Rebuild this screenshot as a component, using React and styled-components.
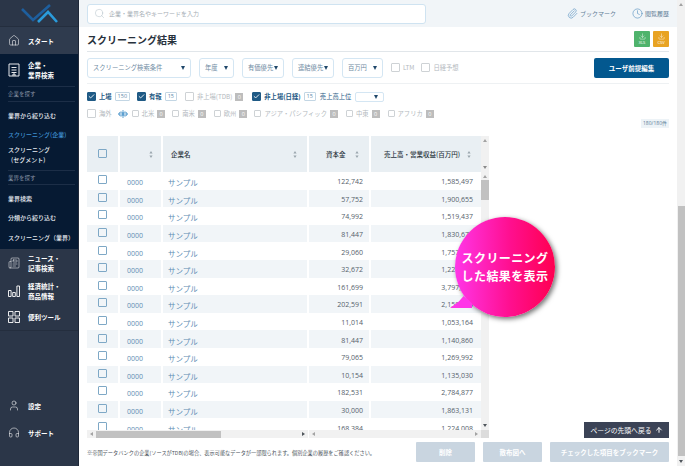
import React from 'react';
import styled, { createGlobalStyle } from 'styled-components';
import { House, Newspaper, User, Headphones, Search, Paperclip, Clock, Download, ArrowUp, Check } from 'lucide-react';

const JP = `"Noto Sans CJK JP", "Noto Sans", sans-serif`;
const NUM = `"Open Sans", "Noto Sans CJK JP", sans-serif`;

const rows = [
  ['122,742', '1,585,497'], ['57,752', '1,900,655'], ['74,992', '1,519,437'], ['81,447', '1,830,671'],
  ['29,060', '1,757,204'], ['32,672', '1,224,518'], ['161,699', '3,797,120'], ['202,591', '2,158,336'],
  ['11,014', '1,053,164'], ['81,447', '1,140,860'], ['79,065', '1,269,992'], ['10,154', '1,135,030'],
  ['182,531', '2,784,877'], ['30,000', '1,863,131'], ['168,384', '1,224,008'],
];

const GlobalStyle = createGlobalStyle`
  html, body { margin: 0; padding: 0; width: 685px; height: 466px; overflow: hidden; background: #fff; }
  * { box-sizing: border-box; }
`;

const Page = styled.div`
  display: flex;
  width: 685px;
  height: 466px;
  font-family: ${JP};
  overflow: hidden;
`;

const Sidebar = styled.aside`
  width: 79px;
  flex: none;
  display: flex;
  flex-direction: column;
  background: #2b3648;
  border-right: 1px solid #1f2838;
  color: #fff;
`;
const LogoBox = styled.div`
  height: 27px;
  flex: none;
  border-bottom: 1px solid #242e3e;
`;
const NavItem = styled.div`
  height: ${(p) => p.$h || 27}px;
  flex: none;
  display: flex;
  align-items: center;
  gap: 8px;
  padding-left: 8px;
  background: ${(p) => p.$bg || 'transparent'};
  font-size: 6.5px;
  line-height: 10px;
  font-weight: 700;
  svg { flex: none; width: 12px; }
`;
const SubMenu = styled.div`
  height: 163px;
  flex: none;
  background: #061a33;
  display: flex;
  flex-direction: column;
  padding-left: 8px;
`;
const SubHead = styled.div`
  height: ${(p) => p.$h || 16}px;
  flex: none;
  margin: ${(p) => p.$mt || 0}px 3px 0 0;
  border-top: 1px solid #1c2e47;
  border-bottom: 1px solid #1c2e47;
  display: flex;
  align-items: center;
  font-size: 5.5px;
  color: #8793a5;
`;
const SubLink = styled.div`
  margin-top: ${(p) => p.$mt || 0}px;
  padding-left: ${(p) => p.$indent || 0}px;
  height: 10px;
  flex: none;
  line-height: 10px;
  font-size: 6px;
  color: ${(p) => (p.$on ? '#3e8fd0' : '#e6ebf1')};
  font-weight: 500;
  white-space: nowrap;
`;
const SideSpacer = styled.div`
  flex: 1;
  border-top: 1px solid #242e3e;
`;
const SideEnd = styled.div`
  height: 20px;
  flex: none;
`;

const Main = styled.main`
  flex: 1;
  min-width: 0;
  position: relative;
  display: flex;
  flex-direction: column;
`;
const TopBar = styled.div`
  height: 27px;
  flex: none;
  background: #f1f5f8;
  display: flex;
  align-items: center;
  padding: 0 8px;
`;
const SearchBox = styled.div`
  width: 339px;
  height: 20px;
  margin-right: auto;
  background: #fff;
  border: 1px solid #cfe3f1;
  border-radius: 3px;
  display: flex;
  align-items: center;
  gap: 4px;
  padding-left: 6px;
  font-size: 6px;
  color: #a6aeb5;
`;
const TopLink = styled.div`
  display: flex;
  align-items: center;
  gap: 2px;
  margin-left: ${(p) => p.$ml || 0}px;
  font-size: 6px;
  color: #5f7d96;
  white-space: nowrap;
  svg { color: #4f8dbd; flex: none; }
`;
const TitleRow = styled.div`
  height: 25px;
  flex: none;
  margin: 0 8px;
  border-bottom: 1px solid #e1e6ea;
  display: flex;
  align-items: center;
  justify-content: space-between;
`;
const Title = styled.h1`
  margin: 0;
  font-size: 10px;
  font-weight: 700;
  color: #27313c;
`;
const Exports = styled.div`
  display: flex;
  gap: 3px;
  padding-bottom: 1px;
`;
const ExportBtn = styled.div`
  width: 16px;
  height: 16px;
  background: ${(p) => p.$c};
  border-radius: 1px;
  color: #fff;
  display: flex;
  flex-direction: column;
  align-items: center;
  justify-content: center;
  font-family: ${NUM};
  font-size: 4px;
  line-height: 5px;
`;
const FilterRow = styled.div`
  height: 32px;
  flex: none;
  margin: 0 8px;
  border-bottom: 1px solid #eef1f3;
  display: flex;
  align-items: center;
  gap: 8px;
`;
const Select = styled.div`
  width: ${(p) => p.$w}px;
  height: 20px;
  flex: none;
  border: 1px solid #d4e6f3;
  border-radius: 3px;
  padding: 0 5px;
  display: flex;
  align-items: center;
  justify-content: space-between;
  font-size: 6.3px;
  color: #6f8ba3;
  white-space: nowrap;
`;
const Caret = styled.span`
  width: 0;
  height: 0;
  flex: none;
  border-left: 2px solid transparent;
  border-right: 2px solid transparent;
  border-top: 4px solid #20486b;
`;
const EditBtn = styled.div`
  width: 75px;
  height: 20px;
  margin-left: auto;
  background: #03588f;
  border-radius: 2px;
  color: #fff;
  font-size: 6.5px;
  font-weight: 700;
  display: flex;
  align-items: center;
  justify-content: center;
`;
const CheckRow = styled.div`
  display: flex;
  align-items: center;
  height: 17px;
  flex: none;
  margin: ${(p) => p.$mt || 0}px 8px 0;
`;
const Item = styled.div`
  display: flex;
  align-items: center;
  gap: 3px;
  margin-right: ${(p) => p.$mr || 0}px;
  font-size: 6.3px;
  white-space: nowrap;
  font-weight: ${(p) => (p.$on ? 700 : 400)};
  color: ${(p) => (p.$on ? '#1f5a85' : '#b3b9be')};
`;
const PlainLabel = styled.span`
  font-size: 6.3px;
  color: #1f5a85;
  white-space: nowrap;
`;
const Box = styled.span`
  width: ${(p) => p.$s || 9}px;
  height: ${(p) => p.$s || 9}px;
  flex: none;
  display: inline-flex;
  align-items: center;
  justify-content: center;
  background: ${(p) => (p.$on ? '#1f5a85' : '#fff')};
  border: 1px solid ${(p) => (p.$on ? '#1f5a85' : '#ced2d5')};
  border-radius: 1px;
  color: #fff;
`;
const Count = styled.span`
  height: 9px;
  padding: 0 2px;
  border: 1px solid #c3d6e4;
  border-radius: 1px;
  font-family: ${NUM};
  font-size: 5.5px;
  line-height: 7px;
  font-weight: 400;
  color: #5d8aab;
`;
const Zero = styled.span`
  width: 8px;
  height: 8px;
  background: #bdbdbd;
  color: #fff;
  font-family: ${NUM};
  font-size: 5.5px;
  font-weight: 400;
  line-height: 8px;
  text-align: center;
`;
const MiniSelect = styled.span`
  width: 29px;
  height: 10px;
  margin-left: 4px;
  border: 1px solid #d4e6f3;
  border-radius: 2px;
  display: inline-flex;
  align-items: center;
  justify-content: flex-end;
  padding-right: 5px;
`;
const LinkMark = styled.span`
  display: inline-flex;
  margin-right: 4px;
`;
const Total = styled.div`
  align-self: flex-end;
  flex: none;
  margin: -3px 8px 0 0;
  height: 9px;
  padding: 0 2px;
  background: #edf3f7;
  color: #5d7f98;
  font-family: ${NUM};
  font-size: 5px;
  line-height: 9px;
`;

const TableWrap = styled.div`
  width: 402px;
  height: 302px;
  flex: none;
  margin: 8px 0 0 8px;
  display: flex;
  flex-direction: column;
`;
const HeadRow = styled.div`
  display: flex;
  height: 36px;
  flex: none;
`;
const Body = styled.div`
  flex: 1;
  min-height: 0;
  display: flex;
`;
const RowsClip = styled.div`
  width: 394px;
  overflow: hidden;
`;
const Row = styled.div`
  display: flex;
  height: 17.6px;
  background: ${(p) => (p.$odd ? '#f1f5f8' : '#fff')};
`;
const Cell = styled.div`
  width: ${(p) => p.$w}px;
  flex: none;
  display: flex;
  align-items: center;
  justify-content: ${(p) => p.$j || 'flex-start'};
  padding: ${(p) => p.$p || '0'};
  border-right: ${(p) => (p.$gap === undefined ? 2 : p.$gap)}px solid #fff;
  font-family: ${NUM};
  font-size: 7px;
  color: #55616b;
  white-space: nowrap;
`;
const HeadCell = styled(Cell)`
  background: #e9eff3;
  font-family: ${JP};
  font-size: 6.5px;
  font-weight: 500;
  color: #2b3640;
  justify-content: ${(p) => p.$j || 'space-between'};
`;
const RowBox = styled(Box)`
  border: 1px solid #7ea8c6;
  background: transparent;
  transform: translateY(-1px);
`;
const CodeText = styled.span`
  color: #5e8db3;
  transform: translateY(1.5px);
`;
const NameText = styled.span`
  font-family: ${JP};
  font-size: 7.5px;
  color: #5e8db3;
  transform: translateY(1.5px);
`;
const Amount = styled.span`
  transform: translateY(1px);
`;
const Sort = styled.svg`
  width: 4px;
  height: 7px;
  flex: none;
  fill: #9aa5ad;
`;
const VScroll = styled.div`
  width: 8px;
  flex: none;
  background: #f1f1f1;
  display: flex;
  flex-direction: column;
  align-items: center;
  justify-content: space-between;
  padding: 3px 0;
`;
const VThumbBox = styled.div`
  flex: 1;
  width: 100%;
  padding-top: 2px;
`;
const VThumb = styled.div`
  width: 100%;
  height: 20px;
  background: #c1c1c1;
`;
const Tri = styled.span`
  width: 0;
  height: 0;
  flex: none;
  border-left: 2px solid transparent;
  border-right: 2px solid transparent;
  ${(p) => (p.$down ? `border-top: 3px solid ${p.$c || '#50565c'};` : `border-bottom: 3px solid ${p.$c || '#a3a3a3'};`)}
`;
const SideTri = styled.span`
  width: 0;
  height: 0;
  flex: none;
  border-top: 2px solid transparent;
  border-bottom: 2px solid transparent;
  ${(p) => (p.$right ? `border-left: 3px solid ${p.$c || '#50565c'};` : `border-right: 3px solid ${p.$c || '#a3a3a3'};`)}
`;
const HBar = styled.div`
  height: 8px;
  flex: none;
  display: flex;
`;
const HScroll = styled.div`
  width: ${(p) => p.$w}px;
  flex: none;
  margin-right: ${(p) => p.$mr || 0}px;
  background: #f1f1f1;
  display: flex;
  align-items: center;
  justify-content: space-between;
  padding: 0 3px;
`;
const HThumb = styled.div`
  width: 125px;
  height: 7px;
  margin: 0 auto 0 3px;
  background: #c1c1c1;
`;
const Corner = styled.div`
  width: 8px;
  background: #dcdcdc;
`;

const Footer = styled.div`
  height: 28px;
  flex: none;
  display: flex;
  align-items: center;
  padding: 0 8px;
`;
const Note = styled.div`
  font-size: 5.2px;
  color: #4a525a;
  white-space: nowrap;
`;
const Buttons = styled.div`
  display: flex;
  gap: 8px;
  margin-left: auto;
`;
const GrayBtn = styled.div`
  width: ${(p) => p.$w}px;
  height: 20px;
  background: #c9d5e0;
  border-radius: 1px;
  color: #fff;
  font-size: 6.5px;
  font-weight: 700;
  display: flex;
  align-items: center;
  justify-content: center;
`;
const ToTop = styled.div`
  position: absolute;
  left: 505px;
  top: 422px;
  width: 85px;
  height: 16px;
  background: #3b4356;
  color: #fff;
  font-size: 6.8px;
  display: flex;
  align-items: center;
  justify-content: center;
  gap: 3px;
`;
const Bubble = styled.div`
  position: absolute;
  left: 376px;
  top: 217px;
  width: 100px;
  height: 100px;
  border-radius: 50%;
  background: linear-gradient(90deg, #ff36e8 0%, #ff0f8f 55%, #ff0050 100%);
  box-shadow: 2px 2px 5px rgba(0, 0, 0, 0.55);
  color: #fff;
  font-size: 12px;
  line-height: 18px;
  font-weight: 700;
  letter-spacing: 0.4px;
  text-align: center;
  display: flex;
  flex-direction: column;
  justify-content: center;
  white-space: nowrap;
  &::before {
    content: '';
    position: absolute;
    left: -5px;
    bottom: 9px;
    width: 22px;
    height: 12px;
    background: #ff36e8;
    clip-path: polygon(0 100%, 40% 45%, 62% 0, 100% 60%, 100% 100%);
  }
`;
const PageScroll = styled.div`
  width: 8px;
  flex: none;
  background: #f1f1f1;
  display: flex;
  flex-direction: column;
  align-items: center;
  padding: 3px 0;
`;
const PageThumb = styled.div`
  width: 7px;
  height: 250px;
  margin-top: 200px;
  background: #c1c1c1;
`;
const PageTrackEnd = styled.div`
  flex: 1;
  display: flex;
  align-items: flex-end;
`;

const SortIcon = () => (
  <Sort viewBox="0 0 4 7"><path d="M2 0l1.6 2.6H.4zM2 7L.4 4.4h3.2z" /></Sort>
);

const Logo = () => (
  <svg width="78" height="26" viewBox="0 0 78 26" fill="none" strokeWidth="2.6">
    <path d="M22 9l11 11L50 5" stroke="#1e5f9e" />
    <path d="M38 22l10-10 9 10" stroke="#2a9bdb" />
  </svg>
);
const BuildingIcon = () => (
  <svg width="12" height="14" viewBox="0 0 12 14" fill="none" stroke="#fff" strokeWidth="0.9">
    <path d="M1 1h10v12H1zM3.500 4.500h5M3.500 7h5M3.500 9.500h5M5 13v-2h2v2" />
  </svg>
);
const ChartIcon = () => (
  <svg width="12" height="12" viewBox="0 0 12 12" fill="none" stroke="#fff" strokeWidth="0.9">
    <path d="M.5 5.500h2.600v6H.5zM4.700 7.500h2.600v4H4.700zM8.900 1h2.600v10.500H8.900z" />
  </svg>
);
const GridIcon = () => (
  <svg width="12" height="12" viewBox="0 0 12 12" fill="none" stroke="#fff" strokeWidth="0.9">
    <path d="M.5.5h4.500v4.500H.5zM7 .5h4.500v4.500H7zM.5 7h4.500v4.500H.5zM7 7h4.500v4.500H7z" />
  </svg>
);
const LinkIcon = () => (
  <svg width="10" height="8" viewBox="0 0 10 8" fill="none" stroke="#4f97cc" strokeWidth="0.9">
    <circle cx="3" cy="4" r="2" />
    <circle cx="7" cy="4" r="2" />
    <path d="M5 0v8M0 4h10" />
  </svg>
);

const Filter = ({ label, on, count, zero, mr, s }) => (
  <Item $on={on} $mr={mr}>
    <Box $on={on} $s={s}>{on && <Check size={7} strokeWidth={3} />}</Box>
    {label}
    {count && <Count>{count}</Count>}
    {zero && <Zero>0</Zero>}
  </Item>
);

const App = () => (
  <Page>
    <GlobalStyle />
    <Sidebar>
      <LogoBox><Logo /></LogoBox>
      <NavItem $bg="#2f3b4e"><House size={13} strokeWidth={1.1} />スタート</NavItem>
      <NavItem $bg="#061a33" $h={32}><BuildingIcon /><span>企業・<br />業界検索</span></NavItem>
      <SubMenu>
        <SubHead>企業を探す</SubHead>
        <SubLink $mt={9}>業界から絞り込む</SubLink>
        <SubLink $mt={9} $on>スクリーニング(企業)</SubLink>
        <SubLink $mt={5}>スクリーニング</SubLink>
        <SubLink $indent={3}>(セグメント)</SubLink>
        <SubHead $mt={5} $h={15}>業界を探す</SubHead>
        <SubLink $mt={9}>業界検索</SubLink>
        <SubLink $mt={9}>分類から絞り込む</SubLink>
        <SubLink $mt={10}>スクリーニング（業界）</SubLink>
      </SubMenu>
      <NavItem $h={28}><Newspaper size={12} strokeWidth={1} /><span>ニュース・<br />記事検索</span></NavItem>
      <NavItem><ChartIcon /><span>経済統計・<br />商品情報</span></NavItem>
      <NavItem $h={26}><GridIcon />便利ツール</NavItem>
      <SideSpacer />
      <NavItem><User size={13} strokeWidth={1.1} />設定</NavItem>
      <NavItem><Headphones size={13} strokeWidth={1.1} />サポート</NavItem>
      <SideEnd />
    </Sidebar>
    <Main>
      <TopBar>
        <SearchBox><Search size={11} strokeWidth={1} color="#a9b8c2" />企業・業界名やキーワードを入力</SearchBox>
        <TopLink><Paperclip size={11} strokeWidth={1.3} />ブックマーク</TopLink>
        <TopLink $ml={16}><Clock size={11} strokeWidth={1.3} />閲覧履歴</TopLink>
      </TopBar>
      <TitleRow>
        <Title>スクリーニング結果</Title>
        <Exports>
          <ExportBtn $c="#4fb36c"><Download size={7} strokeWidth={1.5} />XLS</ExportBtn>
          <ExportBtn $c="#e8a323"><Download size={7} strokeWidth={1.5} />CSV</ExportBtn>
        </Exports>
      </TitleRow>
      <FilterRow>
        <Select $w={104}>スクリーニング検索条件<Caret /></Select>
        <Select $w={35}>年度<Caret /></Select>
        <Select $w={42}>有価優先<Caret /></Select>
        <Select $w={42}>連結優先<Caret /></Select>
        <Select $w={41}>百万円<Caret /></Select>
        <Filter label="LTM" mr={-1} />
        <Filter label="日経予想" />
        <EditBtn>ユーザ前提編集</EditBtn>
      </FilterRow>
      <CheckRow $mt={4}>
        <Filter label="上場" on count="150" mr={7} />
        <Filter label="有報" on count="15" mr={8} />
        <Filter label="非上場(TDB)" zero mr={9} />
        <Filter label="非上場(日経)" on count="15" mr={4} />
        <PlainLabel>売上高上位</PlainLabel>
        <MiniSelect><Caret /></MiniSelect>
      </CheckRow>
      <CheckRow>
        <Filter label="海外" mr={6} />
        <LinkMark><LinkIcon /></LinkMark>
        <Filter label="北米" zero s={7} mr={7} />
        <Filter label="南米" zero s={7} mr={8} />
        <Filter label="欧州" zero s={7} mr={7} />
        <Filter label="アジア・パシフィック" zero s={7} mr={8} />
        <Filter label="中東" zero s={7} mr={8} />
        <Filter label="アフリカ" zero s={7} />
      </CheckRow>
      <Total>180/180件</Total>
      <TableWrap>
        <HeadRow>
          <HeadCell $w={33} $j="center"><RowBox /></HeadCell>
          <HeadCell $w={43} $j="flex-end" $p="0 8px 0 0"><SortIcon /></HeadCell>
          <HeadCell $w={146} $p="0 10px 0 8px">企業名<SortIcon /></HeadCell>
          <HeadCell $w={62} $p="0 10px 0 17px">資本金<SortIcon /></HeadCell>
          <HeadCell $w={110} $gap={0} $p="0 10px 0 13px">売上高・営業収益(百万円)<SortIcon /></HeadCell>
          <VScroll><Tri /><Tri $down $c="#8a8a8a" /></VScroll>
        </HeadRow>
        <Body>
          <RowsClip>
            {rows.map(([capital, sales], i) => (
              <Row key={i} $odd={i % 2 === 1}>
                <Cell $w={33} $j="center"><RowBox /></Cell>
                <Cell $w={43} $p="0 0 0 7px"><CodeText>0000</CodeText></Cell>
                <Cell $w={146} $p="0 0 0 5px"><NameText>サンプル</NameText></Cell>
                <Cell $w={62} $j="flex-end" $p="0 6px 0 0"><Amount>{capital}</Amount></Cell>
                <Cell $w={110} $gap={0} $j="flex-end" $p="0 8px 0 0"><Amount>{sales}</Amount></Cell>
              </Row>
            ))}
          </RowsClip>
          <VScroll>
            <Tri />
            <VThumbBox><VThumb /></VThumbBox>
            <Tri $down />
          </VScroll>
        </Body>
        <HBar>
          <HScroll $w={221} $mr={1}><SideTri /><HThumb /><SideTri $right /></HScroll>
          <HScroll $w={172}><SideTri /><SideTri $right $c="#a3a3a3" /></HScroll>
          <Corner />
        </HBar>
      </TableWrap>
      <Footer>
        <Note>※帝国データバンクの企業(ソースがTDB)の場合、表示可能なデータが一部限られます。個別企業の履歴をご確認ください。</Note>
        <Buttons>
          <GrayBtn $w={59}>削除</GrayBtn>
          <GrayBtn $w={59}>散布図へ</GrayBtn>
          <GrayBtn $w={119}>チェックした項目をブックマーク</GrayBtn>
        </Buttons>
      </Footer>
      <ToTop>ページの先頭へ戻る<ArrowUp size={8} strokeWidth={3} /></ToTop>
      <Bubble>
        <span>スクリーニング</span>
        <span>した結果を表示</span>
      </Bubble>
    </Main>
    <PageScroll>
      <Tri />
      <PageThumb />
      <PageTrackEnd><Tri $down /></PageTrackEnd>
    </PageScroll>
  </Page>
);

export default App;
